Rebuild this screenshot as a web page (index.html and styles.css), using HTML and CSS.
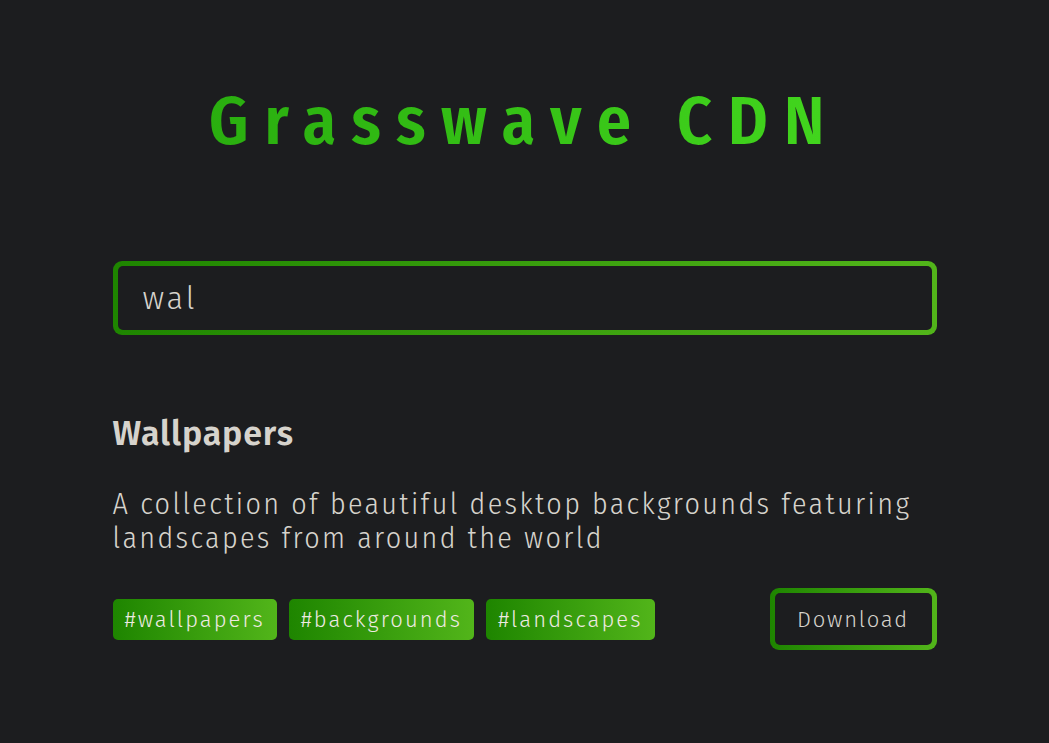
FILE: index.html
```html
<!DOCTYPE html>
<html>
<head>
<meta charset="utf-8">
<link rel="stylesheet" href="styles.css">
</head>
<body>
<main class="page">
  <h1 class="title">Grasswave CDN</h1>
  <div class="search">
    <input class="search-input" type="text" value="wal">
  </div>
  <section class="result">
    <h2 class="result-title">Wallpapers</h2>
    <p class="result-desc">A collection of beautiful desktop backgrounds featuring landscapes from around the world</p>
    <div class="result-footer">
      <div class="tags">
        <span class="tag">#wallpapers</span>
        <span class="tag">#backgrounds</span>
        <span class="tag">#landscapes</span>
      </div>
      <div class="btn-wrap"><button class="btn">Download</button></div>
    </div>
  </section>
</main>
</body>
</html>
```
FILE: styles.css
```css
html, body {
  margin: 0;
  padding: 0;
  background: #1c1d1f;
}
body {
  font-family: "Fira Sans", "Open Sans", sans-serif;
  color: #d6d3cc;
}
.page {
  width: 824px;
  margin: 0 auto;
  padding-top: 81px;
}
.title {
  margin: 0;
  text-align: center;
  font-family: "Fira Sans Condensed", "Open Sans", sans-serif;
  font-weight: 600;
  font-size: 68px;
  line-height: 80px;
  letter-spacing: 0.23em;
  background: linear-gradient(90deg, #26a80d, #46dc20);
  -webkit-background-clip: text;
  background-clip: text;
  color: transparent;
  white-space: nowrap;
}
.search {
  margin-top: 100px;
  padding: 5px;
  border-radius: 9px;
  background: linear-gradient(90deg, #1e8500, #52b51a);
}
.search-input {
  display: block;
  box-sizing: border-box;
  width: 100%;
  height: 64px;
  border: none;
  outline: none;
  border-radius: 5px;
  background: #1c1d1f;
  color: #d6d3cc;
  font-family: "Fira Sans", "Open Sans", sans-serif;
  font-weight: 300;
  font-size: 31px;
  letter-spacing: 0.09em;
  padding: 0 25px;
}
.result {
  margin-top: 79px;
}
.result-title {
  margin: 0;
  font-size: 34px;
  line-height: 40px;
  font-weight: 600;
  letter-spacing: 0.025em;
}
.result-desc {
  margin: 33px 0 0;
  font-family: "Fira Sans Condensed", "Open Sans", sans-serif;
  font-size: 30px;
  line-height: 34px;
  font-weight: 300;
  letter-spacing: 0.078em;
}
.result-footer {
  margin-top: 33px;
  display: flex;
  justify-content: space-between;
  align-items: center;
}
.tags {
  display: flex;
  gap: 12px;
}
.tag {
  display: inline-block;
  height: 41px;
  line-height: 41px;
  padding: 0 12px;
  border-radius: 5px;
  background: linear-gradient(90deg, #1e8500, #52b51a);
  color: #eeeae2;
  font-size: 22px;
  font-weight: 300;
  letter-spacing: 0.095em;
}
.btn-wrap {
  padding: 5px;
  border-radius: 9px;
  background: linear-gradient(90deg, #1e8500, #52b51a);
}
.btn {
  display: block;
  width: 157px;
  height: 52px;
  border: none;
  border-radius: 5px;
  background: #1c1d1f;
  color: #d6d3cc;
  font-family: "Fira Sans", "Open Sans", sans-serif;
  font-weight: 300;
  font-size: 22px;
  letter-spacing: 0.08em;
}
```
